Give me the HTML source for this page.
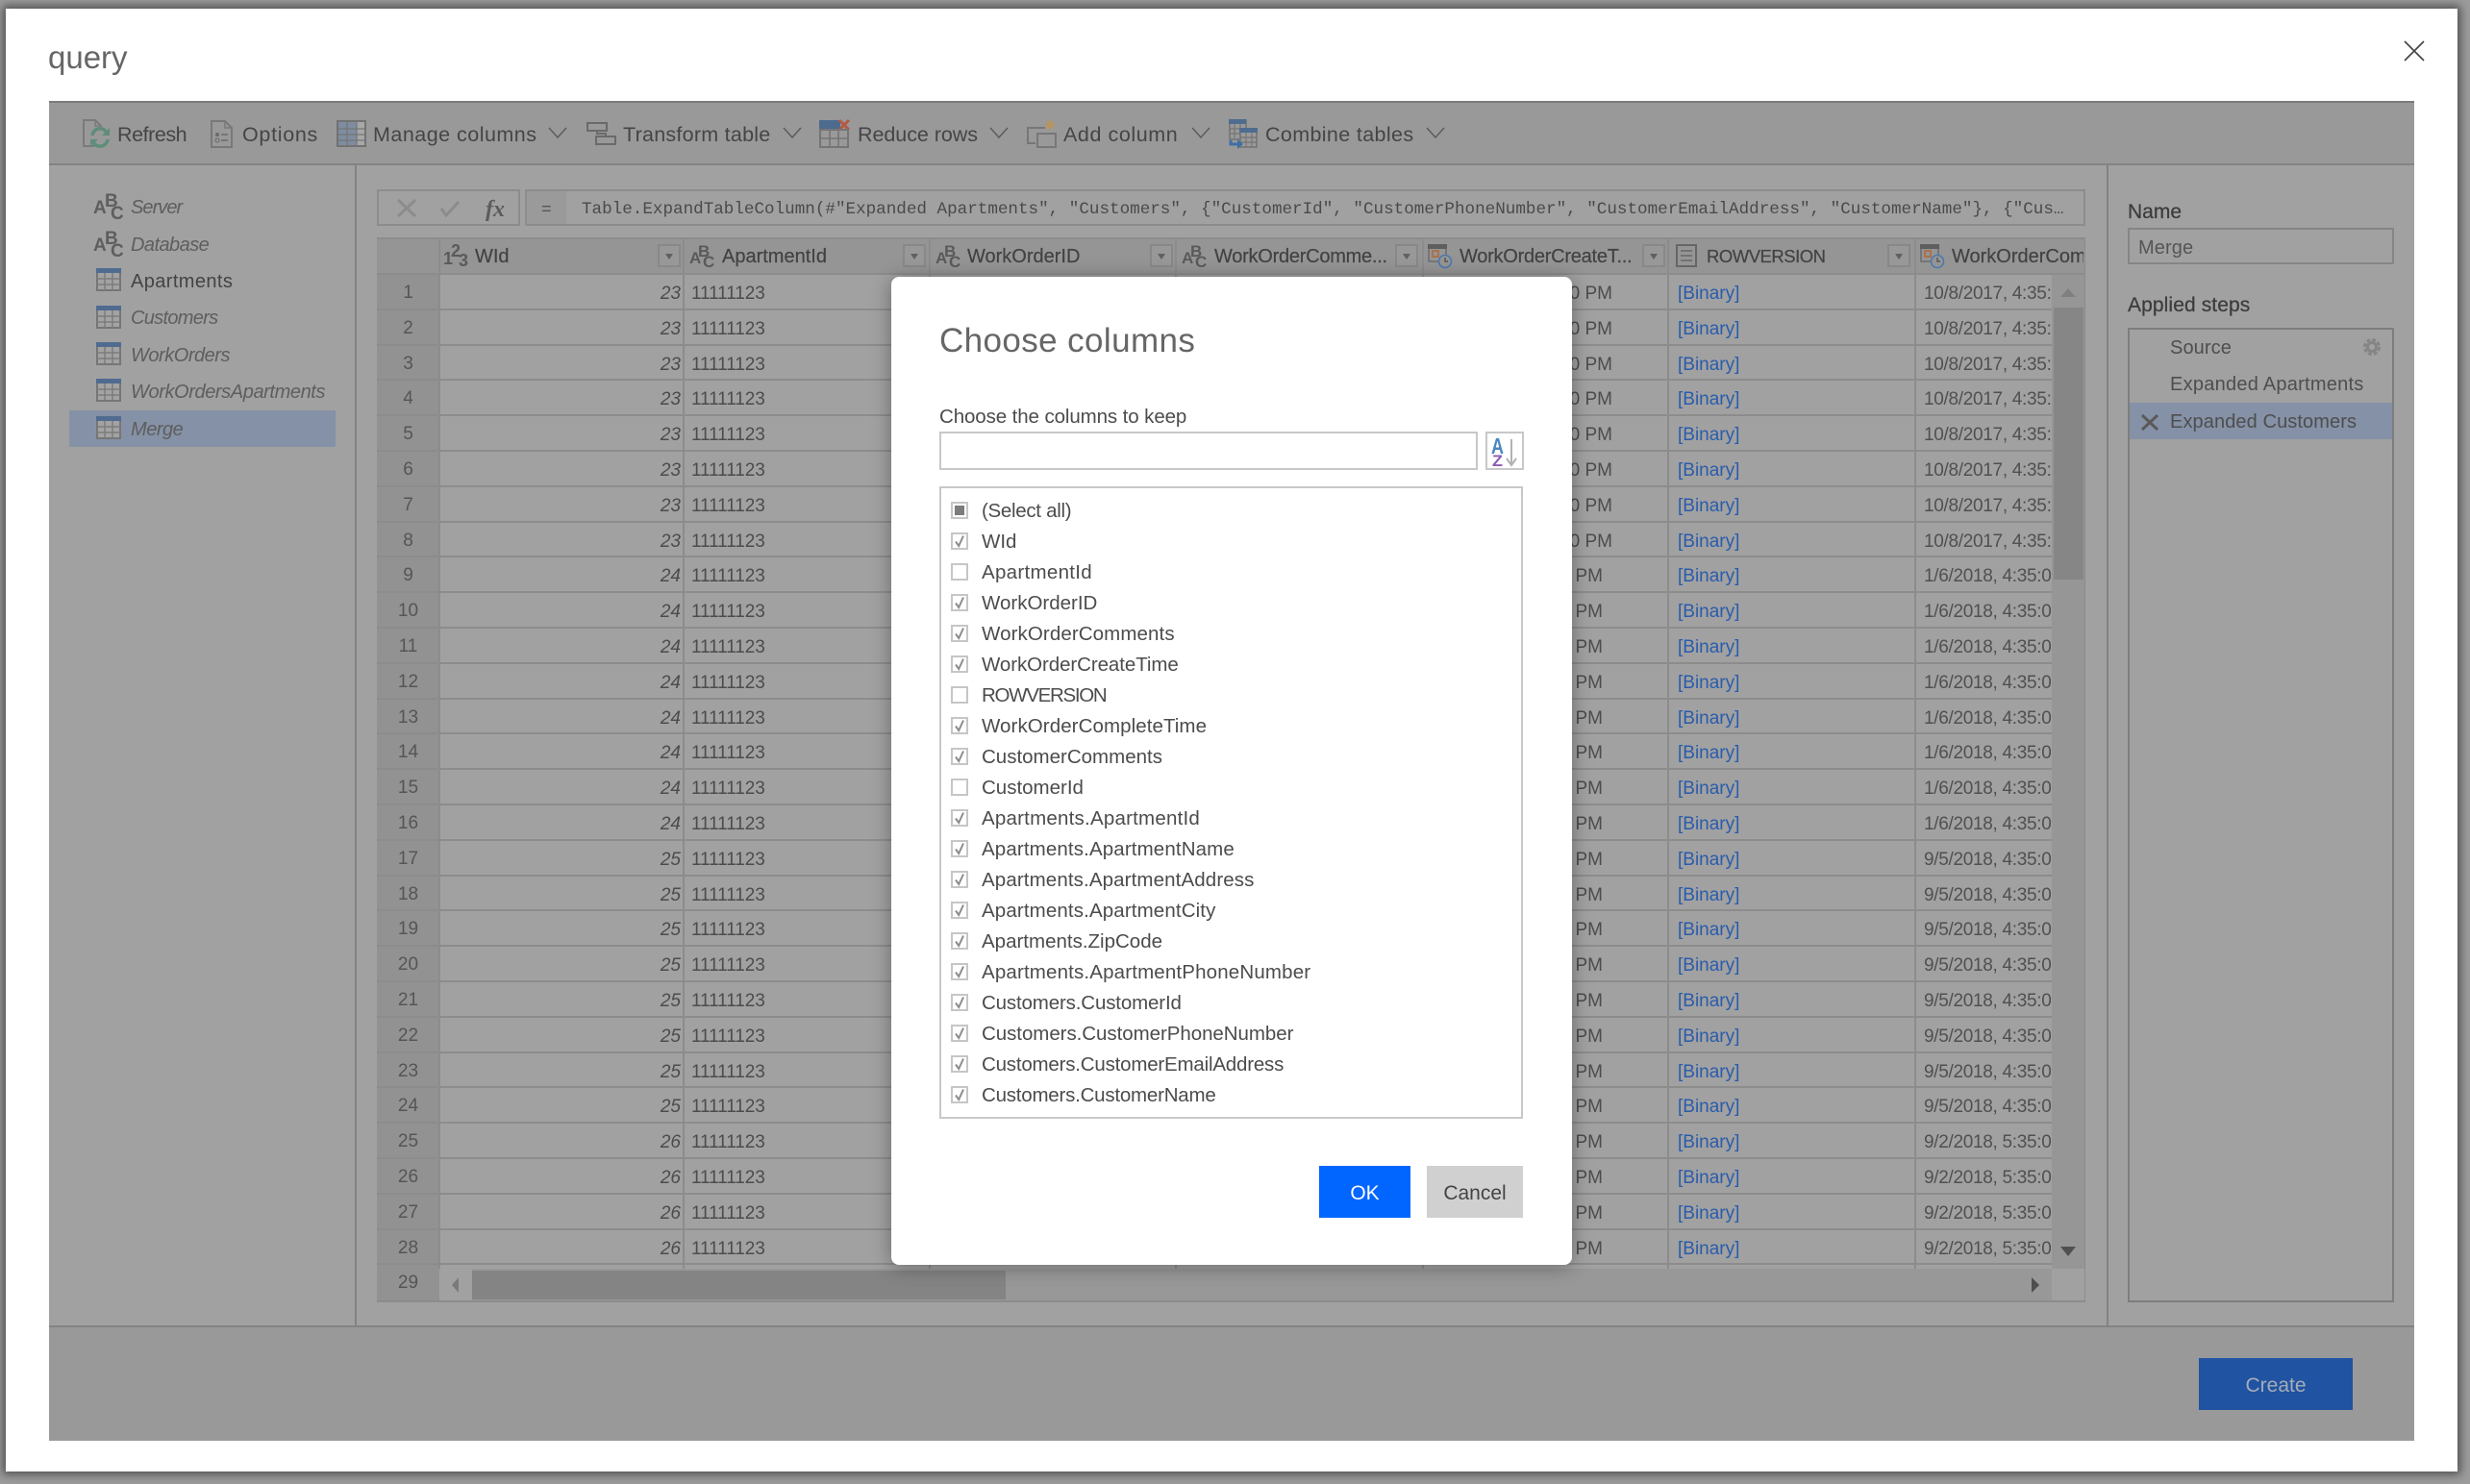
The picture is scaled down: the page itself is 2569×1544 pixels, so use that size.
<!DOCTYPE html>
<html lang="en"><head><meta charset="utf-8"><title>query</title>
<style>
html,body{margin:0;padding:0}
body{width:2569px;height:1544px;overflow:hidden;position:relative;background:#9c9c9c;font-family:"Liberation Sans",sans-serif;color:#444}
.a{position:absolute;white-space:nowrap;line-height:30px}
.b{position:absolute}
svg{position:absolute;overflow:visible}
.tb{font-size:21.5px;color:#454545;letter-spacing:.25px;top:125px}
.ch{fill:none;stroke:#5c5c5c;stroke-width:1.5}
.lf{font-size:20px;left:136px;font-style:italic;color:#5e5e5e;letter-spacing:-.15px}
.hd{font-size:20px;color:#424242;top:252px;-webkit-text-stroke:.2px #424242}
.dd{position:absolute;top:254px;width:20px;height:20px;border:2px solid #888;background:#989898}
.dd:after{content:"";position:absolute;left:6px;top:8px;border:4.5px solid transparent;border-top:6px solid #606060;border-bottom:0}
.r{position:relative;height:36.8px;width:1742px;font-size:19px;line-height:39px;border-bottom:2px solid #8c8c8c;box-sizing:border-box;color:#4c4c4c}
.r>*{position:absolute;top:0;white-space:nowrap;font-style:normal;text-decoration:none}
.n{left:0;width:65px;height:100%;text-align:center;background:#929292;color:#555;line-height:37px}
.i{left:65px;width:251px;text-align:right;font-style:italic!important}
.u{left:327px;letter-spacing:-.1px}
.p{right:457px}
.q{right:467px}
.l{left:1353px;color:#2a5cab}
.t{left:1609px;width:135px;overflow:hidden;color:#505050;letter-spacing:-.3px}
.it{height:32px;position:relative;font-size:20.5px;line-height:32px;color:#4c4c4c;white-space:nowrap;padding-left:32px}
.it svg{left:0;top:6px}
.st{font-size:20px;left:2257px;color:#4e4e4e;letter-spacing:.1px}
.lb{font-size:21px;left:2213px;color:#3c3c3c;-webkit-text-stroke:.25px #3c3c3c}
</style></head>
<body>
<svg width="0" height="0" style="position:absolute">
<defs>
<symbol id="tab" viewBox="0 0 26 24">
<rect x="1" y="1" width="24" height="22" fill="#a3a3a3" stroke="#767676" stroke-width="2"/>
<rect x="0" y="0" width="26" height="5" fill="#4f6c90"/>
<path d="M9 5V23M17 5V23M1 11H25M1 17H25" stroke="#7c7c7c" stroke-width="1.5" fill="none"/>
</symbol>
<symbol id="ck" viewBox="0 0 18 18">
<rect x="1" y="1" width="16" height="16" fill="#fff" stroke="#c6c6c6" stroke-width="2"/>
<path d="M5 9.5L8.2 14L13 3.5" fill="none" stroke="#8c8c8c" stroke-width="2"/>
</symbol>
<symbol id="un" viewBox="0 0 18 18">
<rect x="1" y="1" width="16" height="16" fill="#fff" stroke="#c6c6c6" stroke-width="2"/>
</symbol>
</defs>
</svg>

<!-- card -->
<div class="b" style="left:6px;top:9px;width:2550px;height:1522px;background:#fff;box-shadow:0 0 9px 3px rgba(0,0,0,.5)"></div>
<div class="a" style="left:50px;top:45px;font-size:33px;line-height:30px;color:#666">query</div>
<svg style="left:2500px;top:42px" width="22" height="22"><path d="M1 1L21 21M21 1L1 21" stroke="#444" stroke-width="1.6" fill="none"/></svg>

<!-- app area -->
<div class="b" style="left:51px;top:105px;width:2460px;height:1394px;background:#a1a1a1"></div>
<div class="b" style="left:51px;top:105px;width:2460px;height:67px;background:#999;border-top:2px solid #7b7b7b;border-bottom:2px solid #838383;box-sizing:border-box"></div>
<div class="b" style="left:51px;top:1379px;width:2460px;height:120px;background:#999;border-top:2px solid #838383;box-sizing:border-box"></div>
<div class="b" style="left:369px;top:172px;width:2px;height:1207px;background:#838383"></div>
<div class="b" style="left:2191px;top:172px;width:2px;height:1207px;background:#838383"></div>

<!-- toolbar -->
<svg style="left:86px;top:124px" width="32" height="30">
<path d="M12 28H1V1H13L19 7V10" fill="none" stroke="#7a7a7a" stroke-width="2"/><path d="M13 1V7H19" fill="none" stroke="#7a7a7a" stroke-width="1.5"/>
<path d="M10 17A8 8 0 0 1 25 14M26 21A8 8 0 0 1 11 24" fill="none" stroke="#5e8d79" stroke-width="3.5"/>
<path d="M28 9V17H20ZM8 28V21H16Z" fill="#5e8d79"/>
</svg>
<div class="a tb" style="left:122px;letter-spacing:-.45px">Refresh</div>
<svg style="left:219px;top:125px" width="23" height="29">
<path d="M1 1H15L22 8V28H1Z" fill="none" stroke="#787878" stroke-width="2"/><path d="M15 1V8H22" fill="none" stroke="#787878" stroke-width="1.5"/>
<circle cx="7" cy="15" r="2" fill="#6a6a6a"/><circle cx="7" cy="21" r="2" fill="none" stroke="#6a6a6a"/><path d="M11 15H18M11 21H18" stroke="#6a6a6a" stroke-width="1.5"/>
</svg>
<div class="a tb" style="left:252px;letter-spacing:.7px">Options</div>
<svg style="left:350px;top:125px" width="31" height="28">
<rect x="1" y="1" width="29" height="26" fill="#7f8ca0" stroke="#727272" stroke-width="2"/><rect x="21" y="2" width="8" height="24" fill="#a8a8a8"/>
<path d="M11 2V26M21 2V26M2 9H29M2 15H29M2 21H29" stroke="#757575" stroke-width="1.2"/>
</svg>
<div class="a tb" style="left:388px;letter-spacing:.48px">Manage columns</div>
<svg style="left:570px;top:132px" width="20" height="12"><path class="ch" d="M1 1L10 11L19 1"/></svg>
<svg style="left:610px;top:127px" width="31" height="24">
<rect x="1" y="1" width="20" height="8" fill="none" stroke="#6a6a6a" stroke-width="2"/><rect x="10" y="15" width="20" height="8" fill="none" stroke="#6a6a6a" stroke-width="2"/><path d="M11 9V12H20V15" fill="none" stroke="#6a6a6a" stroke-width="2"/>
</svg>
<div class="a tb" style="left:648px">Transform table</div>
<svg style="left:814px;top:132px" width="20" height="12"><path class="ch" d="M1 1L10 11L19 1"/></svg>
<svg style="left:852px;top:123px" width="32" height="31">
<rect x="0" y="2" width="22" height="9" fill="#4c6b8e"/>
<path d="M21 2L31 12M31 2L21 12" stroke="#b05a45" stroke-width="3"/>
<rect x="1" y="12" width="29" height="18" fill="none" stroke="#757575" stroke-width="2"/><path d="M11 12V30M20 12V30M1 21H30" stroke="#757575" stroke-width="1.6"/>
</svg>
<div class="a tb" style="left:892px;letter-spacing:-.05px">Reduce rows</div>
<svg style="left:1029px;top:132px" width="20" height="12"><path class="ch" d="M1 1L10 11L19 1"/></svg>
<svg style="left:1068px;top:124px" width="31" height="30">
<path d="M19 9H1V25H9" fill="none" stroke="#777" stroke-width="2"/><rect x="11" y="15" width="19" height="14" fill="none" stroke="#777" stroke-width="2"/>
<g stroke="#b8935a" stroke-width="1.6"><path d="M24 1V11M19 6H29M20.5 2.5L27.500 9.500M27.500 2.500L20.500 9.500"/></g>
</svg>
<div class="a tb" style="left:1106px;letter-spacing:.58px">Add column</div>
<svg style="left:1239px;top:132px" width="20" height="12"><path class="ch" d="M1 1L10 11L19 1"/></svg>
<svg style="left:1278px;top:124px" width="30" height="31">
<rect x="1" y="1" width="17" height="20" fill="none" stroke="#757575" stroke-width="1.6"/><rect x="0" y="0" width="18" height="5" fill="#4f6c90"/><path d="M6 5V20M12 5V20M1 10H12M1 15H12" stroke="#757575" stroke-width="1.2"/>
<rect x="12" y="10" width="17" height="19" fill="#9a9a9a" stroke="#757575" stroke-width="1.6"/><rect x="11" y="9" width="19" height="5" fill="#4f6c90"/><path d="M18 14V29M24 14V29M12 19H29M12 24H29" stroke="#757575" stroke-width="1.2"/>
<path d="M2 22V26H10" fill="none" stroke="#3f6ea5" stroke-width="3"/><path d="M9 21L15 26L9 31Z" fill="#3f6ea5"/>
</svg>
<div class="a tb" style="left:1316px;letter-spacing:.36px">Combine tables</div>
<svg style="left:1483px;top:132px" width="20" height="12"><path class="ch" d="M1 1L10 11L19 1"/></svg>

<!-- left pane -->
<div class="b" style="left:72px;top:427px;width:277px;height:38px;background:#8591a6"></div>
<svg style="left:97px;top:201px" width="31" height="28" font-family="Liberation Sans" font-weight="700" fill="#5e5e5e"><text x="0" y="21" font-size="19">A</text><text x="12" y="14" font-size="19">B</text><text x="18" y="27" font-size="19">C</text></svg>
<svg style="left:97px;top:240px" width="31" height="28" font-family="Liberation Sans" font-weight="700" fill="#5e5e5e"><text x="0" y="21" font-size="19">A</text><text x="12" y="14" font-size="19">B</text><text x="18" y="27" font-size="19">C</text></svg>
<svg style="left:100px;top:279px" width="26" height="24"><use href="#tab"/></svg>
<svg style="left:100px;top:318px" width="26" height="24"><use href="#tab"/></svg>
<svg style="left:100px;top:356px" width="26" height="24"><use href="#tab"/></svg>
<svg style="left:100px;top:394px" width="26" height="24"><use href="#tab"/></svg>
<svg style="left:100px;top:433px" width="26" height="24"><use href="#tab"/></svg>
<div class="a lf" style="top:201px;letter-spacing:-.95px">Server</div>
<div class="a lf" style="top:240px;letter-spacing:-.55px">Database</div>
<div class="a lf" style="top:278px;font-style:normal;color:#444;letter-spacing:.4px">Apartments</div>
<div class="a lf" style="top:316px;letter-spacing:-.7px">Customers</div>
<div class="a lf" style="top:355px;letter-spacing:-.48px">WorkOrders</div>
<div class="a lf" style="top:393px;letter-spacing:-.4px">WorkOrdersApartments</div>
<div class="a lf" style="top:432px;letter-spacing:-.47px">Merge</div>

<!-- formula bar -->
<div class="b" style="left:392px;top:197px;width:149px;height:38px;border:2px solid #8c8c8c;box-sizing:border-box"></div>
<svg style="left:413px;top:207px" width="120" height="22">
<path d="M1 1L19 18M19 1L1 18" stroke="#8c8c8c" stroke-width="3" fill="none"/>
<path d="M46 10L51 17L64 3" stroke="#8c8c8c" stroke-width="3" fill="none"/>
<text x="92" y="18" font-family="Liberation Serif" font-style="italic" font-weight="700" font-size="24" fill="#5c5c5c">fx</text>
</svg>
<div class="b" style="left:546px;top:197px;width:1623px;height:38px;border:2px solid #8c8c8c;box-sizing:border-box"></div>
<div class="b" style="left:548px;top:199px;width:41px;height:34px;background:#9a9a9a"></div>
<div class="a" style="left:563px;top:202px;font-size:18px;color:#555">=</div>
<div class="a" style="left:605px;top:203px;font-family:'Liberation Mono',monospace;font-size:17.6px;color:#4a4a4a">Table.ExpandTableColumn(#"Expanded Apartments", "Customers", {"CustomerId", "CustomerPhoneNumber", "CustomerEmailAddress", "CustomerName"}, {"Cus…</div>

<!-- grid header -->
<div class="b" style="left:392px;top:247px;width:1777px;height:39px;background:#959595;border-top:2px solid #8c8c8c;border-bottom:2px solid #8c8c8c;box-sizing:border-box"></div>

<svg style="left:461px;top:254px" width="26" height="24" font-family="Liberation Sans" font-weight="700" fill="#5a5a5a"><text x="0" y="21" font-size="18">1</text><text x="8" y="13" font-size="18">2</text><text x="16" y="23" font-size="18">3</text></svg>
<div class="a hd" style="left:494px">WId</div>
<div class="dd" style="left:684px"></div>
<svg style="left:717px;top:254px" width="26" height="25" font-family="Liberation Sans" font-weight="700" fill="#5a5a5a"><text x="0" y="20" font-size="17">A</text><text x="9" y="13" font-size="17">B</text><text x="14" y="24" font-size="17">C</text></svg>
<div class="a hd" style="left:751px">ApartmentId</div>
<div class="dd" style="left:939px"></div>
<svg style="left:973px;top:254px" width="26" height="25" font-family="Liberation Sans" font-weight="700" fill="#5a5a5a"><text x="0" y="20" font-size="17">A</text><text x="9" y="13" font-size="17">B</text><text x="14" y="24" font-size="17">C</text></svg>
<div class="a hd" style="left:1006px">WorkOrderID</div>
<div class="dd" style="left:1196px"></div>
<svg style="left:1229px;top:254px" width="26" height="25" font-family="Liberation Sans" font-weight="700" fill="#5a5a5a"><text x="0" y="20" font-size="17">A</text><text x="9" y="13" font-size="17">B</text><text x="14" y="24" font-size="17">C</text></svg>
<div class="a hd" style="left:1263px;letter-spacing:-.25px">WorkOrderComme...</div>
<div class="dd" style="left:1451px"></div>
<svg style="left:1485px;top:254px" width="26" height="26">
<rect x="1" y="1" width="18" height="17" fill="#959595" stroke="#6c6c6c" stroke-width="1.5"/><rect x="0" y="0" width="20" height="5" fill="#5e5e5e"/><rect x="5" y="7" width="6" height="6" fill="none" stroke="#b06a3a" stroke-width="1.6"/>
<circle cx="18" cy="18" r="6.500" fill="#959595" stroke="#4a79ad" stroke-width="1.6"/><path d="M18 14V18H21" fill="none" stroke="#4a4a4a" stroke-width="1.2"/>
</svg>
<div class="a hd" style="left:1518px;letter-spacing:-.25px">WorkOrderCreateT...</div>
<div class="dd" style="left:1708px"></div>
<svg style="left:1743px;top:254px" width="22" height="24"><rect x="1" y="1" width="20" height="22" fill="none" stroke="#666" stroke-width="2"/><path d="M5 7H17M5 12H17M5 17H17" stroke="#666" stroke-width="1.600"/></svg>
<div class="a hd" style="left:1775px;font-size:18.500px;letter-spacing:-.5px">ROWVERSION</div>
<div class="dd" style="left:1963px"></div>
<svg style="left:1997px;top:254px" width="26" height="26">
<rect x="1" y="1" width="18" height="17" fill="#959595" stroke="#6c6c6c" stroke-width="1.5"/><rect x="0" y="0" width="20" height="5" fill="#5e5e5e"/><rect x="5" y="7" width="6" height="6" fill="none" stroke="#b06a3a" stroke-width="1.6"/>
<circle cx="18" cy="18" r="6.500" fill="#959595" stroke="#4a79ad" stroke-width="1.6"/><path d="M18 14V18H21" fill="none" stroke="#4a4a4a" stroke-width="1.2"/>
</svg>
<div class="b" style="left:2030px;top:252px;width:137px;height:30px;overflow:hidden"><div class="a hd" style="left:0;top:0">WorkOrderCompleteTime</div></div>

<!-- rows -->
<div class="b" style="left:392px;top:286px;width:1742px;height:1069px;overflow:hidden">
<div class="r"><span class="n">1</span><span class="i">23</span><span class="u">11111123</span><span class="p">0 PM</span><span class="l">[Binary]</span><span class="t">10/8/2017, 4:35:00</span></div>
<div class="r"><span class="n">2</span><span class="i">23</span><span class="u">11111123</span><span class="p">0 PM</span><span class="l">[Binary]</span><span class="t">10/8/2017, 4:35:00</span></div>
<div class="r"><span class="n">3</span><span class="i">23</span><span class="u">11111123</span><span class="p">0 PM</span><span class="l">[Binary]</span><span class="t">10/8/2017, 4:35:00</span></div>
<div class="r"><span class="n">4</span><span class="i">23</span><span class="u">11111123</span><span class="p">0 PM</span><span class="l">[Binary]</span><span class="t">10/8/2017, 4:35:00</span></div>
<div class="r"><span class="n">5</span><span class="i">23</span><span class="u">11111123</span><span class="p">0 PM</span><span class="l">[Binary]</span><span class="t">10/8/2017, 4:35:00</span></div>
<div class="r"><span class="n">6</span><span class="i">23</span><span class="u">11111123</span><span class="p">0 PM</span><span class="l">[Binary]</span><span class="t">10/8/2017, 4:35:00</span></div>
<div class="r"><span class="n">7</span><span class="i">23</span><span class="u">11111123</span><span class="p">0 PM</span><span class="l">[Binary]</span><span class="t">10/8/2017, 4:35:00</span></div>
<div class="r"><span class="n">8</span><span class="i">23</span><span class="u">11111123</span><span class="p">0 PM</span><span class="l">[Binary]</span><span class="t">10/8/2017, 4:35:00</span></div>
<div class="r"><span class="n">9</span><span class="i">24</span><span class="u">11111123</span><span class="q">PM</span><span class="l">[Binary]</span><span class="t">1/6/2018, 4:35:00</span></div>
<div class="r"><span class="n">10</span><span class="i">24</span><span class="u">11111123</span><span class="q">PM</span><span class="l">[Binary]</span><span class="t">1/6/2018, 4:35:00</span></div>
<div class="r"><span class="n">11</span><span class="i">24</span><span class="u">11111123</span><span class="q">PM</span><span class="l">[Binary]</span><span class="t">1/6/2018, 4:35:00</span></div>
<div class="r"><span class="n">12</span><span class="i">24</span><span class="u">11111123</span><span class="q">PM</span><span class="l">[Binary]</span><span class="t">1/6/2018, 4:35:00</span></div>
<div class="r"><span class="n">13</span><span class="i">24</span><span class="u">11111123</span><span class="q">PM</span><span class="l">[Binary]</span><span class="t">1/6/2018, 4:35:00</span></div>
<div class="r"><span class="n">14</span><span class="i">24</span><span class="u">11111123</span><span class="q">PM</span><span class="l">[Binary]</span><span class="t">1/6/2018, 4:35:00</span></div>
<div class="r"><span class="n">15</span><span class="i">24</span><span class="u">11111123</span><span class="q">PM</span><span class="l">[Binary]</span><span class="t">1/6/2018, 4:35:00</span></div>
<div class="r"><span class="n">16</span><span class="i">24</span><span class="u">11111123</span><span class="q">PM</span><span class="l">[Binary]</span><span class="t">1/6/2018, 4:35:00</span></div>
<div class="r"><span class="n">17</span><span class="i">25</span><span class="u">11111123</span><span class="q">PM</span><span class="l">[Binary]</span><span class="t">9/5/2018, 4:35:00</span></div>
<div class="r"><span class="n">18</span><span class="i">25</span><span class="u">11111123</span><span class="q">PM</span><span class="l">[Binary]</span><span class="t">9/5/2018, 4:35:00</span></div>
<div class="r"><span class="n">19</span><span class="i">25</span><span class="u">11111123</span><span class="q">PM</span><span class="l">[Binary]</span><span class="t">9/5/2018, 4:35:00</span></div>
<div class="r"><span class="n">20</span><span class="i">25</span><span class="u">11111123</span><span class="q">PM</span><span class="l">[Binary]</span><span class="t">9/5/2018, 4:35:00</span></div>
<div class="r"><span class="n">21</span><span class="i">25</span><span class="u">11111123</span><span class="q">PM</span><span class="l">[Binary]</span><span class="t">9/5/2018, 4:35:00</span></div>
<div class="r"><span class="n">22</span><span class="i">25</span><span class="u">11111123</span><span class="q">PM</span><span class="l">[Binary]</span><span class="t">9/5/2018, 4:35:00</span></div>
<div class="r"><span class="n">23</span><span class="i">25</span><span class="u">11111123</span><span class="q">PM</span><span class="l">[Binary]</span><span class="t">9/5/2018, 4:35:00</span></div>
<div class="r"><span class="n">24</span><span class="i">25</span><span class="u">11111123</span><span class="q">PM</span><span class="l">[Binary]</span><span class="t">9/5/2018, 4:35:00</span></div>
<div class="r"><span class="n">25</span><span class="i">26</span><span class="u">11111123</span><span class="q">PM</span><span class="l">[Binary]</span><span class="t">9/2/2018, 5:35:00</span></div>
<div class="r"><span class="n">26</span><span class="i">26</span><span class="u">11111123</span><span class="q">PM</span><span class="l">[Binary]</span><span class="t">9/2/2018, 5:35:00</span></div>
<div class="r"><span class="n">27</span><span class="i">26</span><span class="u">11111123</span><span class="q">PM</span><span class="l">[Binary]</span><span class="t">9/2/2018, 5:35:00</span></div>
<div class="r"><span class="n">28</span><span class="i">26</span><span class="u">11111123</span><span class="q">PM</span><span class="l">[Binary]</span><span class="t">9/2/2018, 5:35:00</span></div>
<div class="r" style="height:38px;border-bottom:0"><span class="n">29</span></div>
</div>
<!-- column separators -->
<div class="b" style="left:456px;top:247px;width:2px;height:1073px;background:#8c8c8c"></div>
<div class="b" style="left:710px;top:247px;width:2px;height:1073px;background:#8c8c8c"></div>
<div class="b" style="left:966px;top:247px;width:2px;height:1073px;background:#8c8c8c"></div>
<div class="b" style="left:1222px;top:247px;width:2px;height:1073px;background:#8c8c8c"></div>
<div class="b" style="left:1479px;top:247px;width:2px;height:1073px;background:#8c8c8c"></div>
<div class="b" style="left:1734px;top:247px;width:2px;height:1073px;background:#8c8c8c"></div>
<div class="b" style="left:1991px;top:247px;width:2px;height:1073px;background:#8c8c8c"></div>

<!-- scrollbars -->
<div class="b" style="left:2134px;top:286px;width:35px;height:1034px;background:#969696"></div>
<div class="b" style="left:2136px;top:320px;width:31px;height:283px;background:#868686"></div>
<svg style="left:2142px;top:298px" width="18" height="12"><path d="M9 2L17 11H1Z" fill="#808080"/></svg>
<svg style="left:2142px;top:1296px" width="18" height="12"><path d="M1 1H17L9 11Z" fill="#505050"/></svg>
<div class="b" style="left:457px;top:1320px;width:1677px;height:33px;background:#989898"></div>
<div class="b" style="left:457px;top:1320px;width:34px;height:33px;background:#a1a1a1"></div>
<div class="b" style="left:2134px;top:1320px;width:35px;height:35px;background:#a1a1a1"></div>
<div class="b" style="left:491px;top:1322px;width:555px;height:30px;background:#848484"></div>
<svg style="left:469px;top:1329px" width="10" height="16"><path d="M8 0V16L1 8Z" fill="#7a7a7a"/></svg>
<svg style="left:2112px;top:1329px" width="10" height="16"><path d="M1 0V16L9 8Z" fill="#4e4e4e"/></svg>
<div class="b" style="left:392px;top:1353px;width:1777px;height:2px;background:#8c8c8c"></div>
<div class="b" style="left:2168px;top:247px;width:1px;height:1108px;background:#8c8c8c"></div>

<!-- right pane -->
<div class="a lb" style="top:206px">Name</div>
<div class="b" style="left:2213px;top:237px;width:277px;height:38px;border:2px solid #858585;box-sizing:border-box"></div>
<div class="a" style="left:2224px;top:243px;font-size:20px;color:#555;letter-spacing:.1px">Merge</div>
<div class="a lb" style="top:303px;letter-spacing:.1px">Applied steps</div>
<div class="b" style="left:2213px;top:341px;width:277px;height:1014px;border:2px solid #7e7e7e;box-sizing:border-box"></div>
<div class="b" style="left:2215px;top:419px;width:273px;height:38px;background:#8591a6"></div>
<div class="a st" style="top:347px">Source</div>
<div class="a st" style="top:385px;letter-spacing:.25px">Expanded Apartments</div>
<div class="a st" style="top:424px">Expanded Customers</div>
<svg style="left:2227px;top:432px" width="18" height="15"><path d="M1 0L17 15M17 0L1 15" stroke="#5a5a5a" stroke-width="3" fill="none"/></svg>
<svg style="left:2458px;top:352px" width="18" height="18"><circle cx="9" cy="9" r="4.500" fill="none" stroke="#858585" stroke-width="3"/><circle cx="9" cy="9" r="7.500" fill="none" stroke="#858585" stroke-width="3" stroke-dasharray="3.900 2"/></svg>

<!-- create -->
<div class="b" style="left:2287px;top:1413px;width:160px;height:54px;background:#2053a1;color:#a4acb9;font-size:21px;line-height:58px;text-align:center">Create</div>

<!-- modal -->
<div class="b" style="left:927px;top:288px;width:708px;height:1028px;background:#fff;border-radius:8px;box-shadow:0 2px 20px rgba(0,0,0,.35)"></div>
<div class="a" style="left:977px;top:340px;font-size:35px;letter-spacing:.4px;color:#666">Choose columns</div>
<div class="a" style="left:977px;top:419px;font-size:20.5px;letter-spacing:-.1px;color:#4c4c4c">Choose the columns to keep</div>
<div class="b" style="left:977px;top:449px;width:560px;height:40px;border:2px solid #c8c8c8;box-sizing:border-box"></div>
<div class="b" style="left:1545px;top:449px;width:40px;height:40px;border:2px solid #c8c8c8;box-sizing:border-box"></div>
<svg style="left:1551px;top:455px" width="30" height="32" font-family="Liberation Sans" font-weight="700">
<text x="0" y="17" font-size="23" textLength="13" lengthAdjust="spacingAndGlyphs" fill="#4a86c0">A</text><text x="1" y="30" font-size="17" textLength="11" lengthAdjust="spacingAndGlyphs" fill="#8e5bb0">Z</text>
<path d="M21 2V29M16 22L21 29L26 22" fill="none" stroke="#b2b2b2" stroke-width="2"/>
</svg>
<div class="b" style="left:977px;top:506px;width:607px;height:658px;border:2px solid #c8c8c8;box-sizing:border-box"></div>
<div class="b" style="left:989px;top:516px;width:580px">
<div class="it" style="letter-spacing:-.3px"><svg width="18" height="18"><use href="#un"/><rect x="4" y="4" width="10" height="10" fill="#7c7c7c"/></svg>(Select all)</div>
<div class="it"><svg width="18" height="18"><use href="#ck"/></svg>WId</div>
<div class="it" style="letter-spacing:.3px"><svg width="18" height="18"><use href="#un"/></svg>ApartmentId</div>
<div class="it"><svg width="18" height="18"><use href="#ck"/></svg>WorkOrderID</div>
<div class="it" style="letter-spacing:.1px"><svg width="18" height="18"><use href="#ck"/></svg>WorkOrderComments</div>
<div class="it" style="letter-spacing:-.08px"><svg width="18" height="18"><use href="#ck"/></svg>WorkOrderCreateTime</div>
<div class="it" style="letter-spacing:-1.3px"><svg width="18" height="18"><use href="#un"/></svg>ROWVERSION</div>
<div class="it" style="letter-spacing:.08px"><svg width="18" height="18"><use href="#ck"/></svg>WorkOrderCompleteTime</div>
<div class="it"><svg width="18" height="18"><use href="#ck"/></svg>CustomerComments</div>
<div class="it"><svg width="18" height="18"><use href="#un"/></svg>CustomerId</div>
<div class="it" style="letter-spacing:.22px"><svg width="18" height="18"><use href="#ck"/></svg>Apartments.ApartmentId</div>
<div class="it" style="letter-spacing:.13px"><svg width="18" height="18"><use href="#ck"/></svg>Apartments.ApartmentName</div>
<div class="it" style="letter-spacing:.12px"><svg width="18" height="18"><use href="#ck"/></svg>Apartments.ApartmentAddress</div>
<div class="it" style="letter-spacing:.13px"><svg width="18" height="18"><use href="#ck"/></svg>Apartments.ApartmentCity</div>
<div class="it"><svg width="18" height="18"><use href="#ck"/></svg>Apartments.ZipCode</div>
<div class="it" style="letter-spacing:.16px"><svg width="18" height="18"><use href="#ck"/></svg>Apartments.ApartmentPhoneNumber</div>
<div class="it" style="letter-spacing:-.15px"><svg width="18" height="18"><use href="#ck"/></svg>Customers.CustomerId</div>
<div class="it" style="letter-spacing:-.05px"><svg width="18" height="18"><use href="#ck"/></svg>Customers.CustomerPhoneNumber</div>
<div class="it" style="letter-spacing:-.2px"><svg width="18" height="18"><use href="#ck"/></svg>Customers.CustomerEmailAddress</div>
<div class="it" style="letter-spacing:-.22px"><svg width="18" height="18"><use href="#ck"/></svg>Customers.CustomerName</div>
</div>
<div class="b" style="left:1372px;top:1213px;width:95px;height:54px;background:#0066ff;color:#fff;font-size:21px;line-height:58px;text-align:center">OK</div>
<div class="b" style="left:1484px;top:1213px;width:100px;height:54px;background:#d0d0d0;color:#444;font-size:21px;line-height:58px;text-align:center">Cancel</div>
</body></html>
